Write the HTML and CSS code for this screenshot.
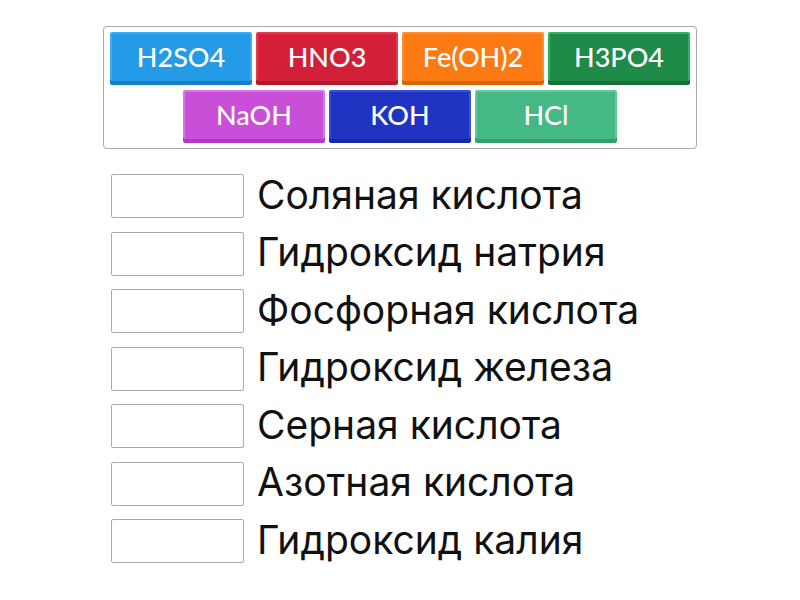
FILE: index.html
```html
<!DOCTYPE html>
<html lang="ru">
<head>
  <meta charset="UTF-8" />
  <meta name="viewport" content="width=device-width, initial-scale=1.0" />
  <title>Кислоты и основания</title>
  <link rel="stylesheet" href="styles.css">
</head>
<body>
  <div class="game">
    <div class="tiles">
      <div class="tile blue">H2SO4</div>
      <div class="tile red">HNO3</div>
      <div class="tile orange">Fe(OH)2</div>
      <div class="tile green">H3PO4</div>
      <div class="tile pink">NaOH</div>
      <div class="tile navy">KOH</div>
      <div class="tile mint">HCl</div>
    </div>

    <div class="answers">
      <div class="answer"><div class="slot"></div><span class="label">Соляная кислота</span></div>
      <div class="answer"><div class="slot"></div><span class="label">Гидроксид натрия</span></div>
      <div class="answer"><div class="slot"></div><span class="label">Фосфорная кислота</span></div>
      <div class="answer"><div class="slot"></div><span class="label">Гидроксид железа</span></div>
      <div class="answer"><div class="slot"></div><span class="label">Серная кислота</span></div>
      <div class="answer"><div class="slot"></div><span class="label">Азотная кислота</span></div>
      <div class="answer"><div class="slot"></div><span class="label">Гидроксид калия</span></div>
    </div>
  </div>
</body>
</html>
```

FILE: styles.css
```css
body {
  margin: 0;
  background: #fff;
  font-family: "Inter", "Liberation Sans", sans-serif;
}

.game {
  width: 594px;
  margin: 26px auto 0;
}

.tiles {
  display: flex;
  flex-wrap: wrap;
  justify-content: center;
  gap: 5px 4px;
  padding: 5px 6px;
  border: 1px solid #aaa;
  border-radius: 4px;
}

.tile {
  width: 142px;
  height: 53px;
  box-sizing: border-box;
  display: flex;
  align-items: center;
  justify-content: center;
  padding-bottom: 4px;
  border-radius: 3px;
  color: #fff;
  font-family: "Lato", "Open Sans", sans-serif;
  font-size: 27px;
  font-weight: 500;
}

.blue   { background: #239be6; box-shadow: inset 0 -4px 0 #1b7dc6, inset 0 0 0 2px #3aaef2; }
.red    { background: #d41f38; box-shadow: inset 0 -4px 0 #b3182d, inset 0 0 0 2px #e23a52; }
.orange { background: #fb7a12; box-shadow: inset 0 -4px 0 #d9650a, inset 0 0 0 2px #ff8f2e; }
.green  { background: #1f8b49; box-shadow: inset 0 -4px 0 #176f3a, inset 0 0 0 2px #2db463; }
.pink   { background: #c94fd8; box-shadow: inset 0 -4px 0 #b437c6, inset 0 0 0 2px #d878e3; }
.navy   { background: #2034c4; box-shadow: inset 0 -4px 0 #182aa2, inset 0 0 0 2px #3a4fe0; }
.mint   { background: #44b985; box-shadow: inset 0 -4px 0 #359e6f, inset 0 0 0 2px #62cb9a; }

.answers {
  display: flex;
  flex-direction: column;
  gap: 13.5px;
  margin-top: 25px;
  padding-left: 8px;
}

.answer {
  display: flex;
  align-items: center;
  gap: 13px;
}

.slot {
  width: 133px;
  height: 44px;
  box-sizing: border-box;
  border: 1px solid #aaa;
  border-radius: 2px;
}

.label {
  font-size: 39px;
  color: #111;
  line-height: 1;
  margin-top: -4px;
}
```
